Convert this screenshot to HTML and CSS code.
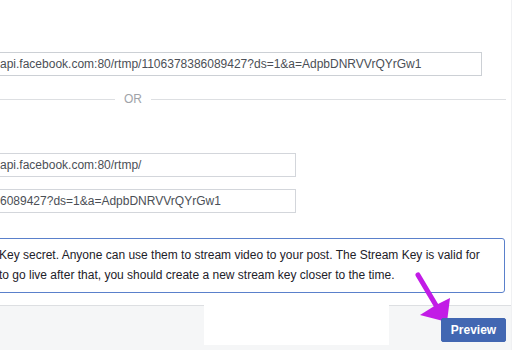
FILE: index.html
```html
<!DOCTYPE html>
<html>
<head>
    <title>Stream Setup</title>
    <link rel="stylesheet" href="styles.css">
</head>
<body>
    <div class="dialog">
        <div class="dialog-body">
            <input class="field field-wide" type="text" readonly value="api.facebook.com:80/rtmp/1106378386089427?ds=1&amp;a=AdpbDNRVVrQYrGw1">
            <div class="divider">
                <span class="divider-line short"></span>
                <span class="divider-text">OR</span>
                <span class="divider-line"></span>
            </div>
            <input class="field field-url" type="text" readonly value="api.facebook.com:80/rtmp/">
            <input class="field field-key" type="text" readonly value="6089427?ds=1&amp;a=AdpbDNRVVrQYrGw1">
            <div class="notice">
                Key secret. Anyone can use them to stream video to your post. The Stream Key is valid for<br>
                to go live after that, you should create a new stream key closer to the time.
            </div>
        </div>
        <div class="dialog-footer">
            <div class="redacted"></div>
            <button class="btn-preview">Preview</button>
        </div>
    </div>
    <!-- annotation arrow pointing at the button -->
    <svg class="arrow" width="517" height="350" viewBox="0 0 517 350">
        <line x1="418" y1="275" x2="437" y2="307" stroke="#c21ce6" stroke-width="5" stroke-linecap="round"/>
        <polygon points="447,322 420,315 436,305 450,298" fill="#c21ce6"/>
    </svg>
</body>
</html>
```

FILE: styles.css
```css
body {
    margin: 0;
    width: 517px;
    height: 350px;
    overflow: hidden;
    background-color: #ffffff;
    font-family: "Liberation Sans", Arial, sans-serif;
    font-size: 12px;
    color: #1d2129;
    position: relative;
}
.dialog {
    margin-left: -6px;
    width: 517px;
    height: 350px;
    border-right: 1px solid #f0f1f3;
    display: flex;
    flex-direction: column;
}
.dialog-body {
    padding: 52px 6px 0 0;
    display: flex;
    flex-direction: column;
    align-items: flex-start;
}
.field {
    box-sizing: border-box;
    height: 24px;
    margin: 0;
    padding: 0 5px;
    border: 1px solid #d3d6db;
    background: #fff;
    font-family: "Liberation Sans", Arial, sans-serif;
    font-size: 12px;
    color: #4b4f56;
    outline: none;
}
.field-wide {
    width: 488px;
    border-color: #ccd0d5;
}
.field-url {
    width: 302px;
    margin-top: 47px;
}
.field-key {
    width: 302px;
    margin-top: 12px;
}
.divider {
    width: 512px;
    height: 14px;
    margin-top: 16px;
    display: flex;
    align-items: center;
}
.divider-line {
    flex: 1;
    height: 1px;
    background-color: #dddfe2;
}
.divider-line.short {
    flex: none;
    width: 121px;
}
.divider-text {
    padding: 0 9px;
    color: #a0a3a9;
    font-size: 12px;
    line-height: 14px;
}
.notice {
    box-sizing: border-box;
    width: 511px;
    margin-top: 25px;
    padding: 6px 8px 7px 4px;
    border: 1px solid #5a80cb;
    border-radius: 3px;
    line-height: 20px;
    white-space: nowrap;
    color: #1d2129;
}
.dialog-footer {
    margin-top: 12px;
    flex: 1;
    display: flex;
    align-items: flex-start;
    background-color: #f5f6f7;
    border-top: 1px solid #dddfe2;
}
.redacted {
    width: 185px;
    height: 40px;
    margin: -1px 0 0 210px;
    background-color: #ffffff;
}
.btn-preview {
    position: relative;
    z-index: 1;
    height: 24px;
    width: 65px;
    margin: 12px 5px 0 auto;
    padding: 0;
    border: 1px solid #4267b2;
    border-radius: 2px;
    background-color: #4267b2;
    color: #ffffff;
    font-family: "Liberation Sans", Arial, sans-serif;
    font-size: 12px;
    font-weight: bold;
}
.arrow {
    position: absolute;
    left: 0;
    top: 0;
}
```
